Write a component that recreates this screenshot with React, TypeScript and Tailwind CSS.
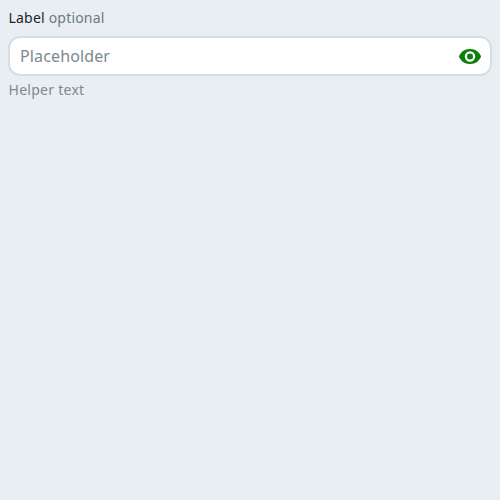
export default function App() {
  return (
    <main className="min-h-screen bg-[#e8eef2] p-2 font-['Noto_Sans',sans-serif]">
      <label htmlFor="field" className="block h-5 whitespace-pre pl-[0.5px] text-[14px] leading-5 tracking-[0.2px] text-[#6c7a80]">
        <span className="text-[#1d2529]">Label</span> optional
      </label>
      <div className="mt-2 flex h-10 items-center rounded-xl border-2 border-[#d3dfe6] bg-white pl-2.5 pr-2">
        <input
          id="field"
          placeholder="Placeholder"
          className="h-6 min-w-0 flex-1 bg-transparent text-[16px] leading-6 tracking-[0.13px] outline-none placeholder:text-[#7c8a90]"
        />
        <button type="button" aria-label="Show" className="size-6 text-[#0b800b]">
          <svg viewBox="0 0 24 24" fill="currentColor" fillRule="evenodd" className="size-6">
            <path d="M12 5C8 5 5 6.300 2.800 9.200L1.300 11.400C0.900 12.100 0.900 12.900 1.300 13.600L2.800 15.800C5 18.700 8 20 12 20S19 18.700 21.200 15.800L22.700 13.600C23.100 12.900 23.100 12.100 22.700 11.400L21.200 9.200C19 6.300 16 5 12 5ZM12 7.300a5.200 5.200 0 1 1 0 10.400a5.200 5.200 0 0 1 0-10.400ZM12 9.500a3 3 0 1 0 0 6a3 3 0 0 0 0-6Z" />
          </svg>
        </button>
      </div>
      <p className="mt-1 pl-[0.5px] text-[14px] leading-5 tracking-[0.27px] text-[#7c8a90]">Helper text</p>
    </main>
  );
}
